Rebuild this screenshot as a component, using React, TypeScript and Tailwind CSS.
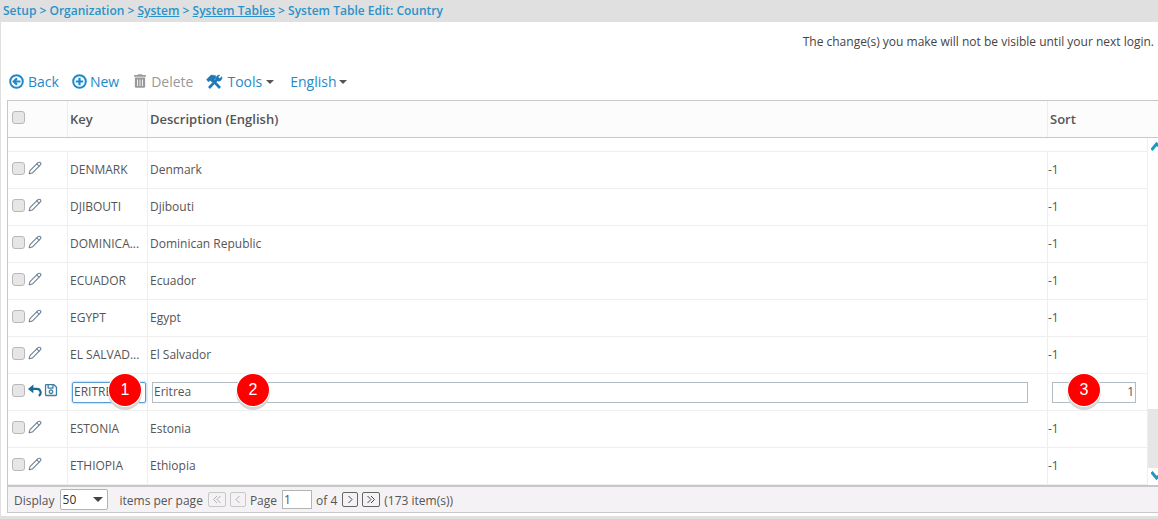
import { FaRegSave, FaTrashAlt } from "react-icons/fa";
import { LuPencil } from "react-icons/lu";

const rows = [
  ["DENMARK", "Denmark"],
  ["DJIBOUTI", "Djibouti"],
  ["DOMINICA...", "Dominican Republic"],
  ["ECUADOR", "Ecuador"],
  ["EGYPT", "Egypt"],
  ["EL SALVAD...", "El Salvador"],
];

function Check() {
  return <span className="block h-[13px] w-[13px] shrink-0 rounded-[3px] border border-[#b8b8b8] bg-[#e6e6e6]" />;
}

function Badge({ n, className }: { n: number; className: string }) {
  return (
    <span
      className={`absolute flex h-8 w-8 items-center justify-center rounded-full bg-[#fe0000] text-[16px] text-white shadow-[0_0_0_1px_#ffffff,0_3px_0_1px_#d6d6d6] font-['Liberation_Sans',sans-serif] ${className}`}
    >
      {n}
    </span>
  );
}

function Row({ k, d }: { k: string; d: string }) {
  return (
    <div className="flex h-[37px] border-b border-[#eeeeee]">
      <div className="flex w-[60px] items-center gap-[3px] border-r border-[#eeeeee] pb-[4px] pl-[4px]">
        <Check />
        <LuPencil className="h-[14px] w-[14px] text-[#6b7f94]" strokeWidth={1.8} />
      </div>
      <div className="flex w-[80px] items-center overflow-hidden whitespace-nowrap border-r border-[#eeeeee] pl-[2px]">{k}</div>
      <div className="flex w-[900px] items-center border-r border-[#eeeeee] pl-[2px]">{d}</div>
      <div className="flex flex-1 items-center">-1</div>
    </div>
  );
}

function PagerBtn({ w, path, off }: { w: string; path: string; off?: boolean }) {
  return (
    <span
      className={`flex h-[15px] items-center justify-center rounded-[2px] border ${w} ${
        off ? "border-[#c8c8c8] text-[#b0b0b0]" : "border-[#666666] text-[#444444]"
      }`}
    >
      <svg width="12" height="9" viewBox="0 0 12 9" fill="none" stroke="currentColor" strokeWidth="1">
        <path d={path} />
      </svg>
    </span>
  );
}

function CircleIcon({ d }: { d: string }) {
  return (
    <svg width="15" height="15" viewBox="0 0 15 15" fill="none" stroke="#1f8ac9" className="shrink-0">
      <circle cx="7.5" cy="7.5" r="6.3" strokeWidth="2" />
      <path d={d} strokeWidth="2.2" />
    </svg>
  );
}

function Caret() {
  return <span className="mt-[2px] border-x-[4px] border-t-[4px] border-x-transparent border-t-[#555555]" />;
}

export default function App() {
  return (
    <div className="flex h-[519px] w-[1158px] flex-col overflow-hidden bg-white font-['Open_Sans',sans-serif] text-[12px] text-[#555555]">
      <div className="flex h-[22px] shrink-0 items-center whitespace-pre bg-[#e0e0e0] pl-[3px] text-[12px] font-semibold text-[#2a93c9]">
        <span>Setup &gt; Organization &gt; </span>
        <span className="underline">System</span>
        <span> &gt; </span>
        <span className="underline">System Tables</span>
        <span> &gt; System Table Edit: Country</span>
      </div>

      <div className="flex flex-1 flex-col border-l border-[#e0e0e0]">
        <div className="flex h-[40px] shrink-0 items-center justify-end pr-[4px] text-[#444444]">
          The change(s) you make will not be visible until your next login.
        </div>

        <div className="flex h-[38px] shrink-0 items-center pl-[8px] text-[14px] text-[#1f8ac9]">
          <span className="flex items-center gap-[4px]">
            <CircleIcon d="M11.5 7.5 H5 M8 4.2 L4.7 7.5 L8 10.8" />
            Back
          </span>
          <span className="ml-[13px] flex items-center gap-[3px]">
            <CircleIcon d="M3.8 7.5 H11.2 M7.5 3.8 V11.2" />
            New
          </span>
          <span className="ml-[15px] flex items-center gap-[5px] text-[#999999]">
            <FaTrashAlt className="h-[14px] w-[12px]" />
            Delete
          </span>
          <span className="ml-[13px] flex items-center gap-[4px]">
            <svg width="17" height="15" viewBox="0 0 17 15" className="shrink-0" fill="#2079b4" stroke="#2079b4">
              <path d="M14 14 L6 5.5" strokeWidth="2.6" fill="none" />
              <path d="M0.5 5.5 L5 1 L9.5 1.5 L10 4 L6 8 L4 6.5 L2.5 8 Z" strokeWidth="0.4" />
              <path d="M3 14 L11 5.5" strokeWidth="2.6" fill="none" />
              <path d="M10 5 A3.4 3.4 0 0 1 14 1 L12.2 3 L13.6 4.6 L15.8 2.6 A3.4 3.4 0 0 1 11.4 7 Z" strokeWidth="0.4" />
            </svg>
            Tools
            <Caret />
          </span>
          <span className="ml-[16px] flex items-center gap-[2px]">
            English
            <Caret />
          </span>
        </div>

        <div className="ml-[6px] mb-[3px] flex flex-1 flex-col border-l border-[#c8c8c8]">
          <div className="flex h-[38px] shrink-0 border-y border-y-[#c8c8c8] bg-[#fcfcfc] text-[13px] font-semibold">
            <div className="flex w-[60px] items-center border-r border-[#eeeeee] pb-[3px] pl-[4px]">
              <Check />
            </div>
            <div className="flex w-[80px] items-center border-r border-[#eeeeee] pl-[2px] pt-[1px]">Key</div>
            <div className="flex w-[900px] items-center border-r border-[#eeeeee] pl-[2px] pt-[1px]">Description (English)</div>
            <div className="flex flex-1 items-center pl-[2px] pt-[1px]">Sort</div>
          </div>

          <div className="relative flex-1 overflow-hidden">
            <div className="h-[14px] border-b border-[#eeeeee]">
              <div className="h-full w-[140px] border-r border-[#eeeeee]" />
            </div>
            {rows.map((r) => (
              <Row key={r[0]} k={r[0]} d={r[1]} />
            ))}
            <div className="flex h-[37px] border-b border-[#eeeeee]">
              <div className="flex w-[60px] items-center gap-[2px] border-r border-[#eeeeee] pb-[4px] pl-[4px]">
                <Check />
                <svg width="14" height="13" viewBox="0 0 13 12" fill="none" className="ml-[1px] shrink-0">
                  <path d="M3 4.5 H8 A3.5 3.5 0 0 1 10 11" stroke="#1a6a96" strokeWidth="2" />
                  <path d="M0 4.5 L5 0.5 V8.5 Z" fill="#1a6a96" />
                </svg>
                <FaRegSave className="h-[14px] w-[14px] text-[#3f7ea3]" />
              </div>
              <div className="flex w-[80px] items-center border-r border-[#eeeeee] pl-[4px]">
                <span className="flex h-[21px] w-[74px] items-center rounded-[2px] border border-[#5b9bd5] pl-[1px] shadow-[0_0_2px_#5b9bd5]">
                  ERITREA
                </span>
              </div>
              <div className="flex w-[900px] items-center border-r border-[#eeeeee] pl-[4px]">
                <span className="flex h-[21px] w-[876px] items-center border border-[#b4bcc2] pl-[1px]">Eritrea</span>
              </div>
              <div className="flex flex-1 items-center pl-[4px]">
                <span className="flex h-[21px] w-[84px] items-center justify-end border border-[#b4bcc2] pr-[1px]">1</span>
              </div>
            </div>
            <Row k="ESTONIA" d="Estonia" />
            <Row k="ETHIOPIA" d="Ethiopia" />

            <div className="absolute bottom-0 right-0 top-0 w-[11px] border-l border-[#eeeeee] bg-white">
              <svg className="absolute left-[3px] top-[4px]" width="8" height="9" viewBox="0 0 8 9">
                <path d="M0.5 8 L5.5 2 L10 6" fill="none" stroke="#1b9bc0" strokeWidth="3" />
              </svg>
              <div className="absolute bottom-[17px] left-0 right-0 h-[59px] bg-[#e6e6e6]" />
              <svg className="absolute bottom-[5px] left-[3px]" width="8" height="9" viewBox="0 0 8 9">
                <path d="M0.5 1 L5.5 7 L10 3" fill="none" stroke="#1b9bc0" strokeWidth="3" />
              </svg>
            </div>

            <Badge n={1} className="left-[101px] top-[236px]" />
            <Badge n={2} className="left-[229px] top-[236px]" />
            <Badge n={3} className="left-[1060px] top-[236px]" />
          </div>

          <div className="flex h-[28px] shrink-0 items-center border-b border-t-2 border-b-[#c8c8c8] border-t-[#c8c8c8] bg-[#f5f2f5] pl-[6px]">
            <span className="pt-[2px]">Display</span>
            <span className="ml-[5px] flex h-[21px] w-[48px] items-center justify-between rounded-[2px] border border-[#b4b4b4] bg-white pl-[2px] pr-[4px] text-[#333333]">
              50
              <span className="border-x-[5px] border-t-[5px] border-x-transparent border-t-[#444444]" />
            </span>
            <span className="ml-[12px] pt-[2px]">items per page</span>
            <span className="ml-[5px]"><PagerBtn w="w-[18px]" path="M6 1 L2.5 4.5 L6 8 M9.5 1 L6 4.5 L9.5 8" off /></span>
            <span className="ml-[4px]"><PagerBtn w="w-[16px]" path="M7.5 1 L4 4.5 L7.5 8" off /></span>
            <span className="ml-[4px] pt-[2px]">Page</span>
            <span className="ml-[5px] flex h-[19px] w-[30px] items-center border border-[#b4b4b4] bg-white pl-[1px]">1</span>
            <span className="ml-[4px] pt-[2px]">of 4</span>
            <span className="ml-[5px]"><PagerBtn w="w-[16px]" path="M4.5 1 L8 4.5 L4.5 8" /></span>
            <span className="ml-[4px]"><PagerBtn w="w-[18px]" path="M2.5 1 L6 4.5 L2.5 8 M6 1 L9.5 4.5 L6 8" /></span>
            <span className="ml-[4px] pt-[2px]">(173 item(s))</span>
          </div>
        </div>
      </div>
      <div className="h-[4px] shrink-0 bg-[#e0e0e0]" />
    </div>
  );
}
